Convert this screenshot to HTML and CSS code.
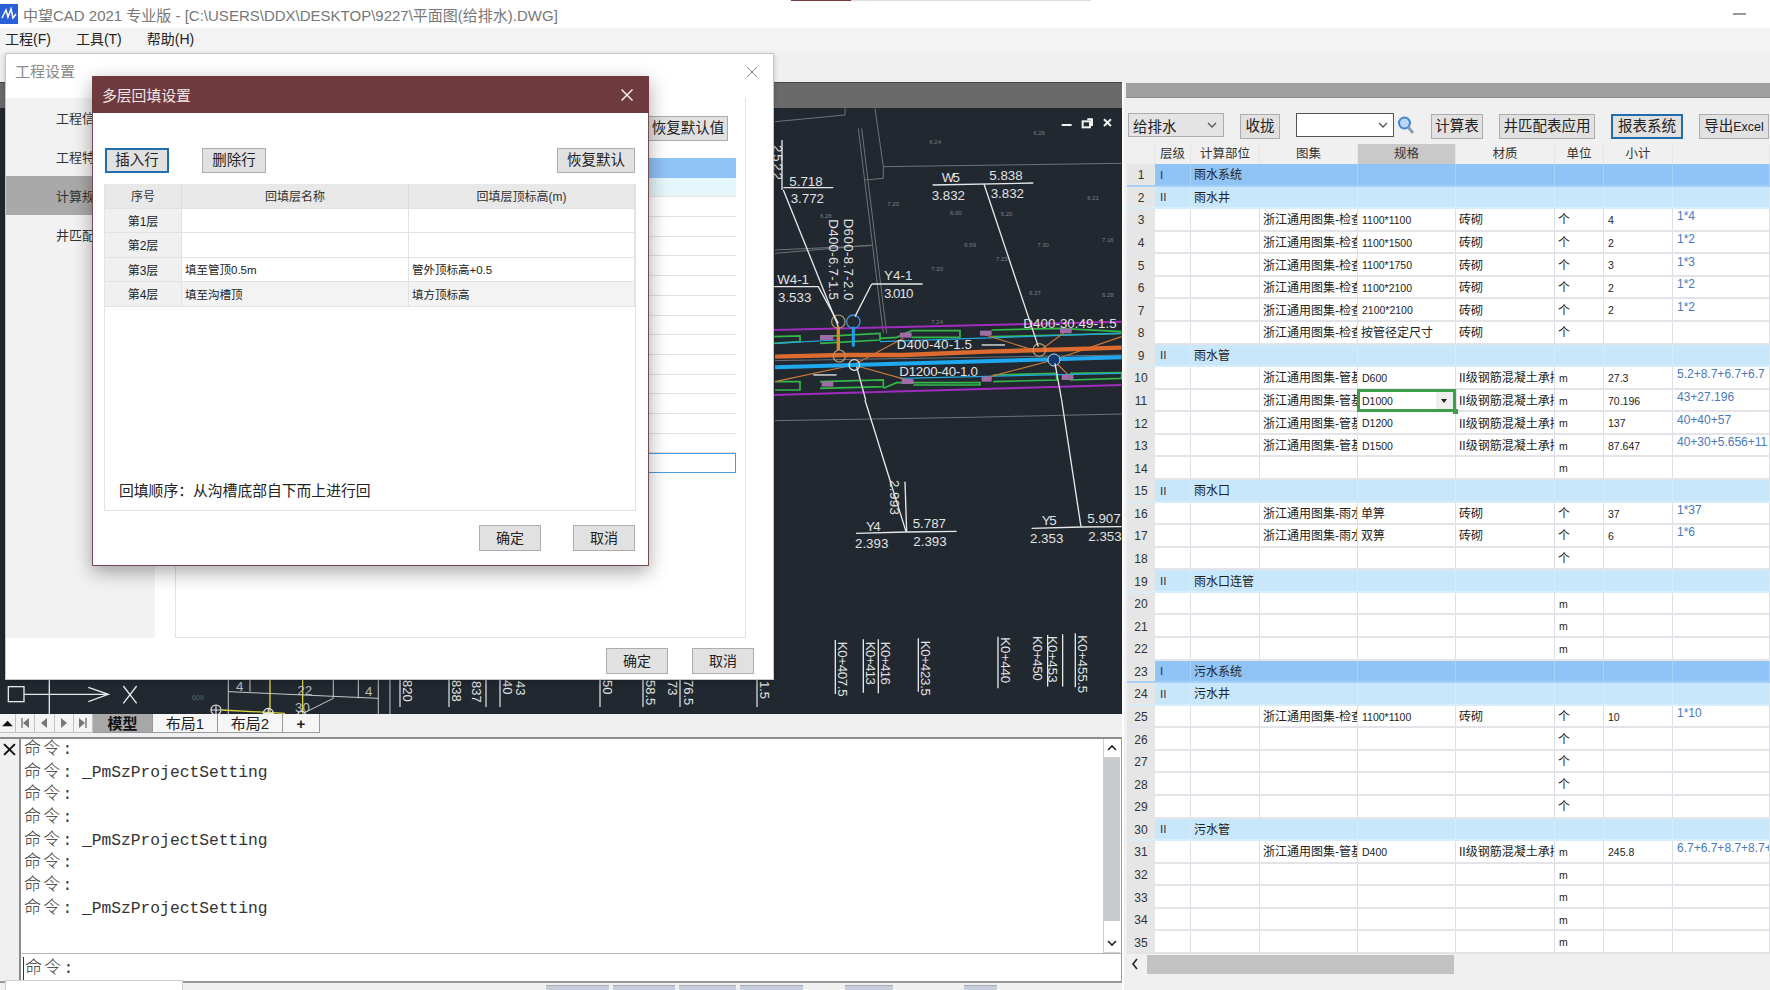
FILE: index.html
```html
<!DOCTYPE html>
<html lang="zh">
<head>
<meta charset="utf-8">
<title>中望CAD 2021 专业版</title>
<link rel="stylesheet" href="styles.css">
</head>
<body>
<div class="app">
  <header class="titlebar">
    <svg class="appicon" viewBox="0 0 18 20"><rect width="18" height="20" fill="#2a5fd8"/><path d="M2 14 L6 6 L8 13 L11 5 L13 14 L16 10" fill="none" stroke="#fff" stroke-width="1.5"/></svg>
    <span class="apptitle">中望CAD 2021 专业版 - [C:\USERS\DDX\DESKTOP\9227\平面图(给排水).DWG]</span>
    <span class="minimize"></span>
    <span class="peek"></span>
  </header>
  <nav class="menubar"><span>工程(F)</span><span>工具(T)</span><span>帮助(H)</span></nav>
  <div class="ribbon"></div>
  <main class="workspace">
    <section class="leftcol">
      <div class="cadhead"></div>
      <div class="canvas">
        <svg class="drawing" viewBox="0 108 1122 606" width="1122" height="606">
          <!-- upper right region, drawn in 3x units -->
          <g transform="translate(770 80) scale(0.3333)">
            <g class="gl">
              <path d="M15 125 L225 105 V85"/>
              <path d="M315 85 L340 260 V295 L285 300"/>
              <path d="M265 145 L340 760"/>
              <path d="M275 145 L350 760"/>
              <path d="M340 260 L1055 250"/>
              <path d="M15 520 L305 495"/>
              <path d="M15 510 L305 497"/>
            </g>
            <g class="pipe-purple">
              <path d="M10 750 L1060 725"/>
              <path d="M10 945 L1055 915"/>
            </g>
            <g class="pipe-green">
              <path d="M10 790 L90 785 V768 L10 770"/>
              <path d="M150 770 L330 760 V780 L150 790"/>
              <path d="M330 775 L380 772 L425 752 H570 V772 H425"/>
              <path d="M665 750 L870 745 L1055 755"/>
              <path d="M665 770 L870 765 L1055 760"/>
              <path d="M15 905 H90 V930 H15"/>
              <path d="M150 905 L340 900 V920 L150 925"/>
              <path d="M340 925 L380 908 H630 V915 L430 915"/>
              <path d="M670 885 L860 880 V900 L670 905"/>
              <path d="M900 880 L1055 878 V895 L900 900"/>
            </g>
            <g class="pipe-thin-cyan">
              <path d="M15 790 L200 780"/>
              <path d="M330 785 L1050 760"/>
              <path d="M390 895 L1050 880"/>
            </g>
            <g class="pipe-thin-orange">
              <path d="M15 905 L250 855"/>
              <path d="M250 855 L400 775"/>
              <path d="M250 855 L430 905"/>
              <path d="M660 890 L850 840 L1055 770"/>
              <path d="M630 760 L805 815 L880 760"/>
              <path d="M850 840 L900 890"/>
            </g>
            <path class="gl" d="M15 842 L1055 825"/>
            <path class="pipe-orange" d="M15 830 L220 825 L400 825 L650 815 L1055 803"/>
            <path class="pipe-cyan" d="M15 862 L250 855 L850 838 L1055 832"/>
            <path class="riser-orange" d="M205 740 V810"/>
            <path class="riser-cyan" d="M250 740 V800"/>
            <g class="pit">
              <rect x="150" y="765" width="40" height="15"/><rect x="390" y="758" width="35" height="15"/>
              <rect x="630" y="752" width="35" height="15"/><rect x="870" y="745" width="35" height="15"/>
              <rect x="155" y="905" width="35" height="15"/><rect x="395" y="897" width="35" height="15"/>
              <rect x="635" y="890" width="30" height="15"/><rect x="875" y="885" width="35" height="15"/>
            </g>
            <g class="well-o"><circle cx="205" cy="725" r="20"/><circle cx="208" cy="828" r="18"/><circle cx="808" cy="810" r="19"/></g>
            <circle class="well-b" cx="250" cy="725" r="20"/>
            <circle class="well-w" cx="253" cy="855" r="16"/>
            <circle class="well-d" cx="852" cy="840" r="18"/>
            <g class="wl">
              <path d="M36 180 V330"/>
              <path d="M40 330 L205 740"/>
              <path d="M40 323 L190 323"/>
              <path d="M488 315 L790 309"/>
              <path d="M642 312 L805 800"/>
              <path d="M10 620 L145 620 L205 730"/>
              <path d="M305 612 H458"/>
              <path d="M305 612 L255 710"/>
              <path d="M260 860 L287 960"/>
              <path d="M855 850 L875 960"/>
              <path d="M635 795 H705"/>
              <path d="M130 885 H200"/>
            </g>
            <text class="t" transform="translate(8 195) rotate(90)" textLength="105">2522</text>
            <text class="t" x="58" y="317">5.718</text>
            <text class="t" x="62" y="370">3.772</text>
            <text class="t" x="515" y="306" textLength="55">W5</text>
            <text class="t" x="658" y="300">5.838</text>
            <text class="t" x="485" y="360">3.832</text>
            <text class="t" x="662" y="354">3.832</text>
            <text class="t" x="22" y="612" textLength="95">W4-1</text>
            <text class="t" x="24" y="666">3.533</text>
            <text class="t" x="342" y="600" textLength="85">Y4-1</text>
            <text class="t" x="342" y="654" textLength="88">3.010</text>
            <text class="t" transform="translate(222 416) rotate(90)" textLength="245">D600-8.7-2.0</text>
            <text class="t" transform="translate(176 418) rotate(90)" textLength="242">D400-6.7-1.5</text>
            <text class="t" x="760" y="745" textLength="280">D400-30.49-1.5</text>
            <text class="t" x="380" y="806" textLength="226">D400-40-1.5</text>
            <text class="t" x="388" y="888" textLength="236">D1200-40-1.0</text>
            <g class="wc">
              <path d="M875 135 H905"/>
              <path d="M952 118 H966 V138" />
              <rect x="938" y="124" width="22" height="18"/>
              <path d="M1002 118 L1023 138 M1023 118 L1002 138"/>
            </g>
            <g class="faint">
              <text x="478" y="192">6.24</text><text x="790" y="166">6.26</text><text x="352" y="378">7.20</text>
              <text x="150" y="414">6.28</text><text x="540" y="405">6.00</text><text x="692" y="407">5.20</text>
              <text x="952" y="360">6.21</text><text x="583" y="500">6.59</text><text x="802" y="502">7.30</text>
              <text x="678" y="542">7.23</text><text x="484" y="573">7.20</text><text x="996" y="485">7.16</text>
              <text x="778" y="644">6.27</text><text x="996" y="650">6.28</text><text x="484" y="733">7.24</text>
            </g>
          </g>
          <!-- lower right region -->
          <g transform="translate(770 400) scale(0.3333)">
            <path class="gl" d="M15 62 L600 52 L1055 42"/>
            <g class="wl">
              <path d="M285 0 L408 395"/>
              <path d="M405 245 L410 395"/>
              <path d="M258 400 L408 396 L560 394"/>
              <path d="M875 0 L933 380"/>
              <path d="M785 385 L935 381 L1055 380"/>
              <path d="M196 720 V882"/><path d="M280 718 V878"/><path d="M325 718 V880"/>
              <path d="M445 715 V875"/><path d="M684 710 V865"/><path d="M833 705 V860"/>
              <path d="M878 703 V860"/><path d="M916 700 V862"/>
            </g>
            <text class="t" transform="translate(360 240) rotate(90)" textLength="105">2.993</text>
            <text class="t" x="288" y="392" textLength="44">Y4</text>
            <text class="t" x="428" y="385">5.787</text>
            <text class="t" x="255" y="445">2.393</text>
            <text class="t" x="430" y="439">2.393</text>
            <text class="t" x="815" y="375" textLength="45">Y5</text>
            <text class="t" x="952" y="370">5.907</text>
            <text class="t" x="780" y="429">2.353</text>
            <text class="t" x="955" y="424">2.353</text>
            <text class="t" transform="translate(205 725) rotate(90)" textLength="165">K0+407.5</text>
            <text class="t" transform="translate(288 725) rotate(90)" textLength="130">K0+413</text>
            <text class="t" transform="translate(332 725) rotate(90)" textLength="130">K0+416</text>
            <text class="t" transform="translate(452 722) rotate(90)" textLength="166">K0+423.5</text>
            <text class="t" transform="translate(692 712) rotate(90)" textLength="138">K0+440</text>
            <text class="t" transform="translate(790 708) rotate(90)" textLength="134">K0+450</text>
            <text class="t" transform="translate(835 708) rotate(90)" textLength="140">K0+453</text>
            <text class="t" transform="translate(925 706) rotate(90)" textLength="174">K0+455.5</text>
          </g>
          <!-- strip under the project dialog -->
          <g transform="translate(0 660) scale(0.3333)">
            <g class="wl">
              <rect x="25" y="80" width="47" height="45" fill="none"/>
              <path d="M72 103 H325 M265 82 L325 103 L265 125"/>
              <path d="M148 60 V165"/>
              <path d="M370 78 L410 130 M410 78 L370 130"/>
            </g>
            <g class="gl2">
              <path d="M685 60 V165"/><path d="M685 95 L1135 115"/>
              <path d="M1000 60 V115 L910 160"/><path d="M1075 60 V115"/><path d="M1135 60 V165"/>
              <path d="M1170 60 V165"/><path d="M750 60 V95"/>
            </g>
            <g class="yl"><path d="M810 60 V155"/><path d="M908 60 V160"/><path d="M665 150 L855 160"/></g>
            <g class="well-w"><circle cx="648" cy="150" r="15"/><path d="M633 150 H663 M648 135 V165"/><circle cx="805" cy="160" r="15"/><path d="M790 160 H820 M805 145 V175"/><circle cx="905" cy="166" r="12"/></g>
            <text class="t2" x="708" y="92">4</text>
            <text class="t2" x="892" y="105">22</text>
            <text class="t2" x="885" y="155">30</text>
            <text class="t2" x="1095" y="108">4</text>
            <text class="faint2" x="575" y="120">609</text>
          </g>
          <g class="wl">
            <path class="thin" d="M400 680 V707"/><path class="thin" d="M449 680 V707"/><path class="thin" d="M486 680 V707"/>
            <path class="thin" d="M500 680 V707"/><path class="thin" d="M600 680 V707"/><path class="thin" d="M643 680 V707"/>
            <path class="thin" d="M680 680 V707"/><path class="thin" d="M757 680 V707"/>
          </g>
          <g class="tk">
            <text transform="translate(403 680) rotate(90)">820</text>
            <text transform="translate(452 680) rotate(90)">838</text>
            <text transform="translate(472 681) rotate(90)">837</text>
            <text transform="translate(503 680) rotate(90)">40</text>
            <text transform="translate(516 681) rotate(90)">43</text>
            <text transform="translate(603 680) rotate(90)">50</text>
            <text transform="translate(646 680) rotate(90)">58.5</text>
            <text transform="translate(668 681) rotate(90)">73</text>
            <text transform="translate(684 680) rotate(90)">76.5</text>
            <text transform="translate(760 681) rotate(90)">1.5</text>
          </g>
        </svg>
      </div>
      <div class="tabs">
        <span class="navbtn nb-up"><svg viewBox="0 0 14 10"><path d="M1 8 L7 2 L13 8Z" fill="#111"/></svg></span>
        <span class="navbtn"><svg viewBox="0 0 10 12"><path d="M2 1 V11" stroke="#777" stroke-width="1.4"/><path d="M9 1 V11 L3 6Z" fill="#777"/></svg></span>
        <span class="navbtn"><svg viewBox="0 0 10 12"><path d="M8 1 V11 L2 6Z" fill="#777"/></svg></span>
        <span class="navbtn"><svg viewBox="0 0 10 12"><path d="M2 1 V11 L8 6Z" fill="#777"/></svg></span>
        <span class="navbtn"><svg viewBox="0 0 10 12"><path d="M8 1 V11" stroke="#777" stroke-width="1.4"/><path d="M1 1 V11 L7 6Z" fill="#777"/></svg></span>
        <span class="tab tab-on">模型</span>
        <span class="tab">布局1</span>
        <span class="tab">布局2</span>
        <span class="tab tab-plus">+</span>
      </div>
      <div class="cmd">
        <div class="cmdside"><svg viewBox="0 0 12 12"><path d="M1 1 L11 11 M11 1 L1 11" stroke="#111" stroke-width="1.8"/></svg></div>
        <div class="cmdmain">
          <div class="cmdlog">
            <div class="cmdtext">
              <p><span class="zh">命令</span>:</p>
              <p><span class="zh">命令</span>: _PmSzProjectSetting</p>
              <p><span class="zh">命令</span>:</p>
              <p><span class="zh">命令</span>:</p>
              <p><span class="zh">命令</span>: _PmSzProjectSetting</p>
              <p><span class="zh">命令</span>:</p>
              <p><span class="zh">命令</span>:</p>
              <p><span class="zh">命令</span>: _PmSzProjectSetting</p>
            </div>
            <div class="vscroll">
              <span class="vbtn"><svg viewBox="0 0 12 8"><path d="M2 6 L6 2 L10 6" fill="none" stroke="#222" stroke-width="1.6"/></svg></span>
              <span class="vthumb"></span>
              <span class="vgap"></span>
              <span class="vbtn"><svg viewBox="0 0 12 8"><path d="M2 2 L6 6 L10 2" fill="none" stroke="#222" stroke-width="1.6"/></svg></span>
            </div>
          </div>
          <div class="cmdinput"><span class="caret"></span><p><span class="zh">命令</span>:</p></div>
        </div>
      </div>
      <div class="statusstrip">
        <span class="st st1"></span><span class="st st2"></span><span class="st st3"></span><span class="st st4"></span><span class="st st5"></span><span class="st st6"></span>
      </div>
    </section>

    <aside class="rightcol">
      <div class="panelhead"></div>
      <div class="toolbar">
        <span class="select">给排水<svg viewBox="0 0 12 8"><path d="M2 2 L6 6 L10 2" fill="none" stroke="#555" stroke-width="1.3"/></svg></span>
        <button class="btn w40">收拢</button>
        <span class="searchgroup">
          <span class="combo"><svg viewBox="0 0 12 8"><path d="M2 2 L6 6 L10 2" fill="none" stroke="#555" stroke-width="1.3"/></svg></span>
          <svg class="lens" viewBox="0 0 18 20"><circle cx="7.5" cy="8" r="5.5" fill="#bcd8f4" stroke="#3f86d4" stroke-width="2"/><path d="M11.5 12.5 L16 18" stroke="#8aa0b8" stroke-width="3"/></svg>
        </span>
        <button class="btn w52">计算表</button>
        <button class="btn w96">井匹配表应用</button>
        <button class="btn w72 focus">报表系统</button>
        <button class="btn w70">导出<span class="excel">Excel</span></button>
      </div>
      <div class="sheet">
        <div class="row head"><div class="c"></div><div class="c">层级</div><div class="c">计算部位</div><div class="c">图集</div><div class="c hl">规格</div><div class="c">材质</div><div class="c">单位</div><div class="c">小计</div><div class="c"></div></div>
        <div class="row g1"><div class="c n">1</div><div class="c lv">I</div><div class="c name">雨水系统</div><div class="c"></div><div class="c"></div><div class="c"></div><div class="c"></div><div class="c"></div><div class="c"></div></div>
        <div class="row g2"><div class="c n">2</div><div class="c lv">II</div><div class="c name">雨水井</div><div class="c"></div><div class="c"></div><div class="c"></div><div class="c"></div><div class="c"></div><div class="c"></div></div>
        <div class="row"><div class="c n">3</div><div class="c"></div><div class="c"></div><div class="c tx">浙江通用图集-检查井</div><div class="c sp">1100*1100</div><div class="c tx">砖砌</div><div class="c tx">个</div><div class="c sp">4</div><div class="c fx">1*4</div></div>
        <div class="row"><div class="c n">4</div><div class="c"></div><div class="c"></div><div class="c tx">浙江通用图集-检查井</div><div class="c sp">1100*1500</div><div class="c tx">砖砌</div><div class="c tx">个</div><div class="c sp">2</div><div class="c fx">1*2</div></div>
        <div class="row"><div class="c n">5</div><div class="c"></div><div class="c"></div><div class="c tx">浙江通用图集-检查井</div><div class="c sp">1100*1750</div><div class="c tx">砖砌</div><div class="c tx">个</div><div class="c sp">3</div><div class="c fx">1*3</div></div>
        <div class="row"><div class="c n">6</div><div class="c"></div><div class="c"></div><div class="c tx">浙江通用图集-检查井</div><div class="c sp">1100*2100</div><div class="c tx">砖砌</div><div class="c tx">个</div><div class="c sp">2</div><div class="c fx">1*2</div></div>
        <div class="row"><div class="c n">7</div><div class="c"></div><div class="c"></div><div class="c tx">浙江通用图集-检查井</div><div class="c sp">2100*2100</div><div class="c tx">砖砌</div><div class="c tx">个</div><div class="c sp">2</div><div class="c fx">1*2</div></div>
        <div class="row"><div class="c n">8</div><div class="c"></div><div class="c"></div><div class="c tx">浙江通用图集-检查井</div><div class="c tx">按管径定尺寸</div><div class="c tx">砖砌</div><div class="c tx">个</div><div class="c"></div><div class="c"></div></div>
        <div class="row g2"><div class="c n">9</div><div class="c lv">II</div><div class="c name">雨水管</div><div class="c"></div><div class="c"></div><div class="c"></div><div class="c"></div><div class="c"></div><div class="c"></div></div>
        <div class="row"><div class="c n">10</div><div class="c"></div><div class="c"></div><div class="c tx">浙江通用图集-管基</div><div class="c sp">D600</div><div class="c tx">II级钢筋混凝土承插管</div><div class="c sp">m</div><div class="c sp">27.3</div><div class="c fx">5.2+8.7+6.7+6.7</div></div>
        <div class="row"><div class="c n">11</div><div class="c"></div><div class="c"></div><div class="c tx">浙江通用图集-管基</div><div class="c sp active">D1000<span class="dropbtn"></span><span class="handle"></span></div><div class="c tx">II级钢筋混凝土承插管</div><div class="c sp">m</div><div class="c sp">70.196</div><div class="c fx">43+27.196</div></div>
        <div class="row"><div class="c n">12</div><div class="c"></div><div class="c"></div><div class="c tx">浙江通用图集-管基</div><div class="c sp">D1200</div><div class="c tx">II级钢筋混凝土承插管</div><div class="c sp">m</div><div class="c sp">137</div><div class="c fx">40+40+57</div></div>
        <div class="row"><div class="c n">13</div><div class="c"></div><div class="c"></div><div class="c tx">浙江通用图集-管基</div><div class="c sp">D1500</div><div class="c tx">II级钢筋混凝土承插管</div><div class="c sp">m</div><div class="c sp">87.647</div><div class="c fx">40+30+5.656+11</div></div>
        <div class="row"><div class="c n">14</div><div class="c"></div><div class="c"></div><div class="c"></div><div class="c"></div><div class="c"></div><div class="c sp">m</div><div class="c"></div><div class="c"></div></div>
        <div class="row g2"><div class="c n">15</div><div class="c lv">II</div><div class="c name">雨水口</div><div class="c"></div><div class="c"></div><div class="c"></div><div class="c"></div><div class="c"></div><div class="c"></div></div>
        <div class="row"><div class="c n">16</div><div class="c"></div><div class="c"></div><div class="c tx">浙江通用图集-雨水口</div><div class="c tx">单箅</div><div class="c tx">砖砌</div><div class="c tx">个</div><div class="c sp">37</div><div class="c fx">1*37</div></div>
        <div class="row"><div class="c n">17</div><div class="c"></div><div class="c"></div><div class="c tx">浙江通用图集-雨水口</div><div class="c tx">双箅</div><div class="c tx">砖砌</div><div class="c tx">个</div><div class="c sp">6</div><div class="c fx">1*6</div></div>
        <div class="row"><div class="c n">18</div><div class="c"></div><div class="c"></div><div class="c"></div><div class="c"></div><div class="c"></div><div class="c tx">个</div><div class="c"></div><div class="c"></div></div>
        <div class="row g2"><div class="c n">19</div><div class="c lv">II</div><div class="c name">雨水口连管</div><div class="c"></div><div class="c"></div><div class="c"></div><div class="c"></div><div class="c"></div><div class="c"></div></div>
        <div class="row"><div class="c n">20</div><div class="c"></div><div class="c"></div><div class="c"></div><div class="c"></div><div class="c"></div><div class="c sp">m</div><div class="c"></div><div class="c"></div></div>
        <div class="row"><div class="c n">21</div><div class="c"></div><div class="c"></div><div class="c"></div><div class="c"></div><div class="c"></div><div class="c sp">m</div><div class="c"></div><div class="c"></div></div>
        <div class="row"><div class="c n">22</div><div class="c"></div><div class="c"></div><div class="c"></div><div class="c"></div><div class="c"></div><div class="c sp">m</div><div class="c"></div><div class="c"></div></div>
        <div class="row g1"><div class="c n">23</div><div class="c lv">I</div><div class="c name">污水系统</div><div class="c"></div><div class="c"></div><div class="c"></div><div class="c"></div><div class="c"></div><div class="c"></div></div>
        <div class="row g2"><div class="c n">24</div><div class="c lv">II</div><div class="c name">污水井</div><div class="c"></div><div class="c"></div><div class="c"></div><div class="c"></div><div class="c"></div><div class="c"></div></div>
        <div class="row"><div class="c n">25</div><div class="c"></div><div class="c"></div><div class="c tx">浙江通用图集-检查井</div><div class="c sp">1100*1100</div><div class="c tx">砖砌</div><div class="c tx">个</div><div class="c sp">10</div><div class="c fx">1*10</div></div>
        <div class="row"><div class="c n">26</div><div class="c"></div><div class="c"></div><div class="c"></div><div class="c"></div><div class="c"></div><div class="c tx">个</div><div class="c"></div><div class="c"></div></div>
        <div class="row"><div class="c n">27</div><div class="c"></div><div class="c"></div><div class="c"></div><div class="c"></div><div class="c"></div><div class="c tx">个</div><div class="c"></div><div class="c"></div></div>
        <div class="row"><div class="c n">28</div><div class="c"></div><div class="c"></div><div class="c"></div><div class="c"></div><div class="c"></div><div class="c tx">个</div><div class="c"></div><div class="c"></div></div>
        <div class="row"><div class="c n">29</div><div class="c"></div><div class="c"></div><div class="c"></div><div class="c"></div><div class="c"></div><div class="c tx">个</div><div class="c"></div><div class="c"></div></div>
        <div class="row g2"><div class="c n">30</div><div class="c lv">II</div><div class="c name">污水管</div><div class="c"></div><div class="c"></div><div class="c"></div><div class="c"></div><div class="c"></div><div class="c"></div></div>
        <div class="row"><div class="c n">31</div><div class="c"></div><div class="c"></div><div class="c tx">浙江通用图集-管基</div><div class="c sp">D400</div><div class="c tx">II级钢筋混凝土承插管</div><div class="c sp">m</div><div class="c sp">245.8</div><div class="c fx">6.7+6.7+8.7+8.7+6</div></div>
        <div class="row"><div class="c n">32</div><div class="c"></div><div class="c"></div><div class="c"></div><div class="c"></div><div class="c"></div><div class="c sp">m</div><div class="c"></div><div class="c"></div></div>
        <div class="row"><div class="c n">33</div><div class="c"></div><div class="c"></div><div class="c"></div><div class="c"></div><div class="c"></div><div class="c sp">m</div><div class="c"></div><div class="c"></div></div>
        <div class="row"><div class="c n">34</div><div class="c"></div><div class="c"></div><div class="c"></div><div class="c"></div><div class="c"></div><div class="c sp">m</div><div class="c"></div><div class="c"></div></div>
        <div class="row"><div class="c n">35</div><div class="c"></div><div class="c"></div><div class="c"></div><div class="c"></div><div class="c"></div><div class="c sp">m</div><div class="c"></div><div class="c"></div></div>
      </div>
      <div class="hscroll">
        <svg viewBox="0 0 8 12"><path d="M6 1 L2 6 L6 11" fill="none" stroke="#222" stroke-width="1.6"/></svg>
        <span class="hthumb"></span>
      </div>
    </aside>
  </main>

  <!-- 工程设置 dialog -->
  <section class="projdlg">
    <div class="projtitle"><span>工程设置</span><svg viewBox="0 0 12 12"><path d="M1 1 L11 11 M11 1 L1 11" stroke="#888" stroke-width="1"/></svg></div>
    <div class="projbody">
      <ul class="projnav">
        <li>工程信息</li>
        <li>工程特征</li>
        <li class="on">计算规则</li>
        <li>井匹配</li>
      </ul>
      <div class="projmain">
        <div class="projtop"><button class="btn restore">恢复默认值</button></div>
        <div class="projtable">
          <div class="prow pblue"></div><div class="prow pcyan"></div><div class="prow"></div><div class="prow"></div>
          <div class="prow"></div><div class="prow"></div><div class="prow"></div><div class="prow"></div>
          <div class="prow"></div><div class="prow"></div><div class="prow"></div><div class="prow"></div>
          <div class="prow"></div><div class="prow"></div><div class="prow"></div><div class="prow psel"></div>
        </div>
      </div>
    </div>
    <div class="projfoot"><button class="btn w62">确定</button><button class="btn w62">取消</button></div>
  </section>

  <!-- 多层回填设置 dialog -->
  <section class="filldlg">
    <div class="fillhead"><span>多层回填设置</span><svg viewBox="0 0 14 14"><path d="M1.5 1.5 L12.5 12.5 M12.5 1.5 L1.5 12.5" stroke="#f4eeee" stroke-width="1.5"/></svg></div>
    <div class="fillbody">
      <div class="fillbar">
        <button class="btn w64 focus">插入行</button>
        <button class="btn w64">删除行</button>
        <button class="btn w78 pushright">恢复默认</button>
      </div>
      <div class="fillpanel">
        <div class="frow fhead"><div>序号</div><div>回填层名称</div><div>回填层顶标高(m)</div></div>
        <div class="frow"><div class="fno">第1层</div><div></div><div></div></div>
        <div class="frow"><div class="fno">第2层</div><div></div><div></div></div>
        <div class="frow"><div class="fno">第3层</div><div class="ft">填至管顶0.5m</div><div class="ft">管外顶标高+0.5</div></div>
        <div class="frow fgrey"><div class="fno">第4层</div><div class="ft">填至沟槽顶</div><div class="ft">填方顶标高</div></div>
        <p class="fnote">回填顺序：从沟槽底部自下而上进行回</p>
      </div>
      <div class="fillfoot"><button class="btn w62">确定</button><button class="btn w62">取消</button></div>
    </div>
  </section>

  <div class="popup"></div>
</div>
</body>
</html>
```
FILE: styles.css
```css
* { box-sizing: border-box; }
html, body { margin: 0; padding: 0; }
body { font-family: "Liberation Sans", "Noto Sans CJK SC", sans-serif; color: #222; background: #f0f0f0; }
p { margin: 0; }
ul { margin: 0; padding: 0; list-style: none; }

.app { position: relative; width: 1770px; height: 990px; overflow: hidden; display: flex; flex-direction: column; background: #f0f0f0; }

.titlebar { position: relative; height: 28px; flex: none; background: #fff; display: flex; align-items: center; padding-right: 24px; }
.appicon { width: 18px; height: 20px; flex: none; }
.apptitle { margin-left: 5px; font-size: 15px; color: #777; white-space: nowrap; }
.minimize { margin-left: auto; width: 13px; height: 2px; background: #999; }
.peek { position: absolute; left: 791px; top: 0; width: 300px; height: 1px; background: linear-gradient(90deg, #7a3c40 0 60px, #ddd 60px); }

.menubar { height: 25px; flex: none; background: #f3f3f3; display: flex; align-items: center; padding: 0 0 6px 5px; gap: 25px; font-size: 14px; color: #222; }
.ribbon { height: 29px; flex: none; background: #f0f0f0; }

.workspace { flex: 1; display: flex; min-height: 0; }
.leftcol { width: 1122px; flex: none; display: flex; flex-direction: column; }
.cadhead { height: 26px; flex: none; background: #6a6a6a; border-top: 1px solid #444; }
.canvas { height: 606px; flex: none; background: #212830; overflow: hidden; }
.drawing { display: block; }

.gl path, path.gl { fill: none; stroke: #6d7276; stroke-width: 3; }
.gl2 path { fill: none; stroke: #c8c8c8; stroke-width: 3; }
.wl path, .wl rect { fill: none; stroke: #e8e8e8; stroke-width: 4; }
.wl path.thin { stroke-width: 1.2; }
.yl path { fill: none; stroke: #d8d840; stroke-width: 4; }
.pipe-purple path { fill: none; stroke: #a02cc0; stroke-width: 6; }
.pipe-green path { fill: none; stroke: #33b84a; stroke-width: 5; }
.pipe-thin-cyan path { fill: none; stroke: #23a8e0; stroke-width: 3.5; }
.pipe-thin-orange path { fill: none; stroke: #cf7a38; stroke-width: 3.5; }
.pipe-orange { fill: none; stroke: #dd6a2e; stroke-width: 13; }
.pipe-cyan { fill: none; stroke: #1fa8ee; stroke-width: 12; }
.riser-orange { fill: none; stroke: #d8862a; stroke-width: 10; }
.riser-cyan { fill: none; stroke: #1fa0ee; stroke-width: 9; }
.pit rect { fill: #a06ca6; }
.well-o circle { fill: none; stroke: #b89a70; stroke-width: 3.5; }
.well-b { fill: none; stroke: #3f8fd8; stroke-width: 4; }
.well-w, .well-w circle, .well-w path { fill: none; stroke: #e4e4e4; stroke-width: 3.5; }
.well-d { fill: #123a70; stroke: #bcd8ee; stroke-width: 3; }
.t { font-family: "Liberation Sans", sans-serif; font-size: 40px; fill: #e2e2e2; }
.t2 { font-family: "Liberation Sans", sans-serif; font-size: 40px; fill: #bbb; }
.wc path, .wc rect { fill: none; stroke: #f2f2f2; stroke-width: 6; }
.faint text { font-family: "Liberation Sans", sans-serif; font-size: 18px; fill: #7c8084; }
.faint2 { font-family: "Liberation Sans", sans-serif; font-size: 22px; fill: #5f6468; }
.tk text { font-family: "Liberation Sans", sans-serif; font-size: 13px; fill: #e2e2e2; }

.tabs { height: 23px; flex: none; background: #f0f0f0; display: flex; align-items: flex-start; }
.navbtn { width: 19.25px; height: 19px; display: flex; align-items: center; justify-content: center; border-right: 1px solid #c4c4c4; border-bottom: 1px solid #c4c4c4; background: #f4f4f4; flex: none; }
.navbtn svg { width: 10px; height: 12px; }
.navbtn.nb-up { width: 16px; }
.nb-up svg { width: 13px; height: 9px; }
.tab { height: 19px; width: 65px; display: flex; align-items: center; justify-content: center; background: #f6f6f6; border-right: 1px solid #9a9a9a; border-bottom: 1px solid #9a9a9a; font-size: 15px; line-height: 1; color: #222; flex: none; }
.tab-on { width: 60px; background: #a8a8a8; font-weight: 700; color: #111; }
.tab-plus { width: 37px; font-weight: 700; }

.cmd { height: 246px; flex: none; display: flex; background: #fff; border-top: 2px solid #8c8c8c; border-bottom: 2px solid #9a9a9a; border-right: 1px solid #9a9a9a; }
.cmdside { width: 21px; flex: none; background: #f0f0f0; border-right: 2px solid #8c8c8c; padding: 4px 3px; }
.cmdside svg { display: block; width: 13px; height: 13px; }
.cmdmain { flex: 1; display: flex; flex-direction: column; min-width: 0; }
.cmdlog { flex: 1; display: flex; min-height: 0; }
.cmdtext { flex: 1; padding: 0 0 0 3px; margin-top: -1px; }
.cmdtext p, .cmdinput p { font-family: "Liberation Mono", "Noto Sans CJK SC", monospace; font-size: 16.3px; height: 22.7px; line-height: 22.7px; color: #333; white-space: pre; }
.zh { font-family: "Noto Sans CJK SC", sans-serif; font-size: 17px; letter-spacing: 2.2px; font-weight: 300; color: #333; line-height: 1; }
.vscroll { width: 17px; flex: none; margin-right: 1px; display: flex; flex-direction: column; border-left: 1px solid #cfcfcf; }
.vbtn { height: 19px; display: flex; align-items: center; justify-content: center; flex: none; background: #fff; border-bottom: 1px solid #cfcfcf; }
.vbtn svg { width: 12px; height: 8px; }
.vthumb { flex: none; height: 163px; background: #c8cacc; }
.vgap { flex: 1; background: #fff; }
.cmdinput { height: 28px; flex: none; display: flex; align-items: center; border-top: 1px solid #b4b4b4; padding: 2px 0 0 1px; margin-left: 1px; }
.caret { width: 1px; height: 24px; background: #333; margin-right: 1px; }

.statusstrip { flex: 1; background: #f0f0f0; display: flex; padding-left: 546px; }
.st { height: 5px; margin-top: 2px; background: #c6cedc; border-top: 1px solid #aab; margin-right: 4px; flex: none; }
.st1 { width: 63px; }
.st2 { width: 62px; }
.st3 { width: 57px; }
.st4 { width: 63px; margin-right: 42px; }
.st5 { width: 48px; margin-right: 71px; }
.st6 { width: 33px; }

.rightcol { flex: 1; min-width: 0; display: flex; flex-direction: column; padding-left: 3px; border-left: 2px solid #fff; overflow: hidden; }
.panelhead { height: 16px; flex: none; background: #a0a0a0; margin-left: -1px; border-top: 1px solid #eee; border-bottom: 1px solid #8c8c8c; }
.toolbar { height: 46px; flex: none; padding: 15px 0 0 1px; display: flex; align-items: flex-start; gap: 16px; background: #f0f0f0; }
.toolbar .btn { margin-top: 1px; }

.btn { font-family: "Liberation Sans", "Noto Sans CJK SC", sans-serif; font-size: 14.5px; line-height: 1; height: 25px; padding: 0; background: #e1e1e1; border: 1px solid #adadad; color: #222; flex: none; white-space: nowrap; }
.btn.focus { border: 2px solid #1f6db0; }
.excel { font-size: 12.5px; }
.w40 { width: 40px; }
.w52 { width: 52px; }
.w62 { width: 62px; }
.w64 { width: 64px; }
.w70 { width: 70px; }
.w72 { width: 72px; }
.w78 { width: 78px; }
.w96 { width: 96px; }
.select { width: 96px; height: 24px; flex: none; background: #e4e4e4; border: 1px solid #adadad; font-size: 14.5px; display: flex; align-items: center; justify-content: space-between; padding: 0 5px 0 4px; }
.select svg, .combo svg { width: 12px; height: 8px; }
.searchgroup { display: flex; gap: 3px; align-items: center; flex: none; }
.combo { width: 98px; height: 24px; background: #fff; border: 1px solid #555; display: flex; align-items: center; justify-content: flex-end; padding-right: 4px; }
.lens { width: 18px; height: 20px; }

.sheet { height: 810px; flex: none; display: grid; grid-template-rows: 20px repeat(35, 1fr); background: #fff; }
.row { display: grid; grid-template-columns: 28px 36px 69px 98px 98px 99px 49px 69px 97px; min-height: 0; border-bottom: 2px solid #e3e3e9; background: #fff; }
.c { border-right: 1px solid #dedee6; overflow: hidden; white-space: nowrap; font-size: 12px; line-height: 1; display: flex; align-items: center; min-width: 0; padding-top: 2px; }
.row.head { background: #f0f0f0; border-bottom: 0; }
.head .c { justify-content: center; border-right: 1px solid #e6e6e6; color: #333; font-size: 12.5px; padding-top: 0; }
.head .hl { background: #c9c9c9; }
.n { background: #e6e6e6; justify-content: center; font-size: 12px; color: #333; border-right: 0; }
.lv { padding-left: 5px; font-size: 11.5px; color: #333; }
.name { padding-left: 3px; font-size: 12px; overflow: visible; }
.tx { padding-left: 3px; font-size: 12px; }
.sp { padding-left: 4px; font-size: 10.5px; }
.fx { padding: 0 0 6px 4px; font-size: 12px; color: #4a78b8; }
.g1 { background: #90c4f6; border-bottom-color: #a8d0f6; }
.g2 { background: #c9e7fb; border-bottom-color: #d7edfb; }
.g1 .c { border-right-color: #a8d2f8; }
.g2 .c { border-right-color: #d4ecfb; }
.g1 .c:nth-child(3), .g2 .c:nth-child(3) { border-right-color: transparent; }
.active { position: relative; overflow: visible; box-shadow: inset 0 0 0 3px #3f9e4c; z-index: 1; margin: -1px -1px -2px -1px; padding-left: 5px; font-size: 10.5px; }
.dropbtn { position: absolute; right: 3px; top: 3px; bottom: 3px; width: 17px; background: #eee; }
.dropbtn::after { content: ""; position: absolute; left: 5px; top: 7px; border-left: 3.5px solid transparent; border-right: 3.5px solid transparent; border-top: 4px solid #222; }
.handle { position: absolute; right: -2px; bottom: -2px; width: 5px; height: 5px; background: #3f9e4c; }

.hscroll { height: 20px; flex: none; display: flex; align-items: center; background: #f0f0f0; padding-left: 4px; }
.hscroll svg { width: 8px; height: 12px; flex: none; }
.hthumb { margin-left: 8px; width: 307px; height: 19px; background: #c2c2c2; flex: none; }

/* dialogs lie over the workspace */
.projdlg { position: absolute; left: 5px; top: 53px; width: 769px; height: 627px; background: #fff; border: 1px solid #c6c6c6; display: flex; flex-direction: column; box-shadow: 0 2px 6px rgba(0,0,0,.2); }
.projtitle { height: 44px; flex: none; display: flex; align-items: flex-start; justify-content: space-between; padding: 6px 15px 0 9px; color: #8a8a8a; font-size: 15px; }
.projtitle svg { width: 12px; height: 12px; margin-top: 6px; }
.projbody { flex: 1; display: flex; min-height: 0; }
.projnav { width: 149px; flex: none; background: #f2f2f2; font-size: 13px; }
.projnav li { height: 39px; padding: 0 0 0 50px; display: flex; align-items: center; color: #333; white-space: nowrap; }
.projnav li.on { background: #a9a9a9; }
.projmain { width: 571px; margin-left: 20px; display: flex; flex-direction: column; flex: none; border: 1px solid #e2e2e2; border-top: 0; position: relative; }
.projtop { height: 60px; flex: none; display: flex; justify-content: flex-end; padding: 18px 17px 0 0; background: #fff; }
.restore { width: 80px; }
.projtable { margin-right: 9px; }
.prow { height: 19.7px; border-bottom: 1px solid #e2e2e2; background: #fff; }
.pblue { background: #8fc2f5; border-bottom: 0; }
.pcyan { background: #e4f6fa; }
.psel { border: 1px solid #4a9bdc; }
.projfoot { height: 41px; flex: none; display: flex; justify-content: flex-end; gap: 24px; padding: 10px 19px 0 0; }
.projfoot .btn { height: 26px; font-size: 14px; }

.filldlg { position: absolute; left: 92px; top: 76px; width: 557px; height: 490px; background: #fff; display: flex; flex-direction: column; border: 1px solid #7a4a4f; border-top: 0; box-shadow: 0 6px 18px rgba(0,0,0,.35); }
.fillhead { height: 37px; flex: none; margin: 0 -1px; background: #6f3a3d; display: flex; align-items: center; justify-content: space-between; padding: 0 15px 0 10px; color: #f2e6e6; font-size: 14.8px; }
.fillhead svg { width: 14px; height: 14px; }
.fillbody { flex: 1; display: flex; flex-direction: column; padding: 35px 13px 0 12px; min-height: 0; }
.fillbar { display: flex; gap: 33px; height: 25px; flex: none; }
.pushright { margin-left: auto; }
.fillpanel { margin: 11px -1px 0; height: 327px; flex: none; border: 1px solid #e4e4e4; border-top: 0; display: flex; flex-direction: column; }
.frow { display: grid; grid-template-columns: 77px 227px 1fr; height: 24.5px; flex: none; border-bottom: 1px solid #e2e2e2; font-size: 12px; }
.frow > div { display: flex; align-items: center; border-right: 1px solid #e2e2e2; white-space: nowrap; overflow: hidden; }
.fhead { background: #e8e8e8; }
.fhead > div { justify-content: center; color: #333; border-right-color: #dcdcdc; }
.fno { justify-content: center; background: #f0f0f0; }
.ft { padding-left: 3px; font-size: 11.5px; }
.fgrey { background: #f3f3f3; }
.fnote { margin-top: auto; padding: 0 0 9px 14px; font-size: 14.8px; line-height: 20px; color: #222; }
.fillfoot { display: flex; justify-content: flex-end; gap: 32px; margin-top: 14px; }
.fillfoot .btn { height: 26px; font-size: 14px; }

.popup { position: absolute; left: 5px; top: 980px; width: 178px; height: 12px; background: #fff; border: 1px solid #d0d0d0; }
```
